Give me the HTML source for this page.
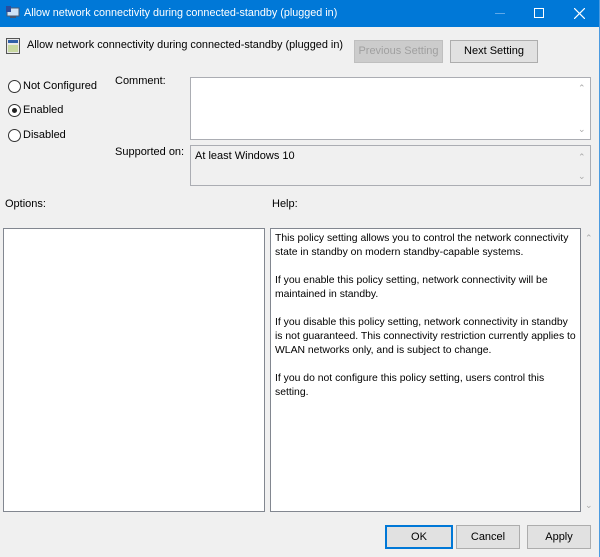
<!DOCTYPE html>
<html><head><style>
*{box-sizing:border-box;margin:0;padding:0}
body{width:600px;height:557px;background:#f0f0f0;font-family:"Liberation Sans",sans-serif;font-size:11px;color:#000;position:relative;overflow:hidden}
.a{position:absolute;white-space:nowrap}
.tb{left:0;top:0;width:600px;height:27px;background:#0078d7;color:#fff}
.btn{position:absolute;border:1px solid #adadad;background:#e1e1e1;text-align:center;font-size:11px}
.box{position:absolute;border:1px solid #abadb3;background:#fff}
.radio{position:absolute;width:13px;height:13px;border:1px solid #333;border-radius:50%;background:#fff}
.sb{position:absolute;color:#aaa;font-size:9px}
</style></head><body>
<div class="a tb">
 <svg class="a" style="left:6px;top:6px" width="15" height="14"><rect x="1" y="2" width="12" height="8" fill="#cfe3f7" stroke="#4a5870"/><rect x="4" y="10" width="6" height="2" fill="#4a5870"/><rect x="0" y="0" width="5" height="6" fill="#2a4c9b"/></svg>
 <div class="a" style="left:24px;top:7px;font-size:10.8px">Allow network connectivity during connected-standby (plugged in)</div>
 <div class="a" style="left:495px;top:13px;width:10px;height:1px;background:#5fa8e8"></div>
 <div class="a" style="left:534px;top:8px;width:10px;height:10px;border:1px solid #fff"></div>
 <svg class="a" style="left:574px;top:8px" width="11" height="11"><path d="M0 0L11 11M11 0L0 11" stroke="#fff" stroke-width="1.2"/></svg>
</div>
<svg class="a" style="left:6px;top:38px" width="14" height="16"><rect x="0.5" y="0.5" width="13" height="15" fill="#e8e8e8" stroke="#555"/><rect x="2" y="2" width="10" height="3" fill="#2f5fa8"/><rect x="2" y="7" width="10" height="7" fill="#c8d8a0"/></svg>
<div class="a" style="left:27px;top:39px;font-size:10.9px">Allow network connectivity during connected-standby (plugged in)</div>
<div class="btn" style="left:354px;top:40px;width:89px;height:23px;line-height:21px;color:#a0a0a0;background:#cccccc;border-color:#bfbfbf">Previous Setting</div>
<div class="btn" style="left:450px;top:40px;width:88px;height:23px;line-height:21px">Next Setting</div>
<div class="radio" style="left:8px;top:80px"></div>
<div class="a" style="left:23px;top:80px">Not Configured</div>
<div class="radio" style="left:8px;top:104px"><div style="position:absolute;left:3px;top:3px;width:5px;height:5px;border-radius:50%;background:#222"></div></div>
<div class="a" style="left:23px;top:104px">Enabled</div>
<div class="radio" style="left:8px;top:129px"></div>
<div class="a" style="left:23px;top:129px">Disabled</div>
<div class="a" style="left:115px;top:75px">Comment:</div>
<div class="box" style="left:190px;top:77px;width:401px;height:63px"></div>
<div class="sb" style="left:578px;top:83px">⌃</div><div class="sb" style="left:578px;top:124px">⌄</div>
<div class="a" style="left:115px;top:146px">Supported on:</div>
<div class="box" style="left:190px;top:145px;width:401px;height:41px;background:#f0f0f0"></div>
<div class="a" style="left:195px;top:150px">At least Windows 10</div>
<div class="sb" style="left:578px;top:152px">⌃</div><div class="sb" style="left:578px;top:171px">⌄</div>
<div class="a" style="left:5px;top:198px">Options:</div>
<div class="a" style="left:272px;top:198px">Help:</div>
<div class="box" style="left:3px;top:228px;width:262px;height:284px;border-color:#828790"></div>
<div class="box" style="left:270px;top:228px;width:311px;height:284px;border-color:#828790"></div>
<div class="a" style="left:275px;top:232px;font-size:10.4px;line-height:14px">This policy setting allows you to control the network connectivity<br>state in standby on modern standby-capable systems.<br><br>If you enable this policy setting, network connectivity will be<br>maintained in standby.<br><br>If you disable this policy setting, network connectivity in standby<br>is not guaranteed. This connectivity restriction currently applies to<br>WLAN networks only, and is subject to change.<br><br>If you do not configure this policy setting, users control this<br>setting.</div>
<div class="sb" style="left:585px;top:233px">⌃</div><div class="sb" style="left:585px;top:500px">⌄</div>
<div class="btn" style="left:385px;top:525px;width:68px;height:24px;line-height:20px;border:2px solid #0078d7">OK</div>
<div class="btn" style="left:456px;top:525px;width:64px;height:24px;line-height:22px">Cancel</div>
<div class="btn" style="left:527px;top:525px;width:64px;height:24px;line-height:22px">Apply</div>
<div class="a" style="left:599px;top:0;width:1px;height:557px;background:#4c9be0"></div>
</body></html>
